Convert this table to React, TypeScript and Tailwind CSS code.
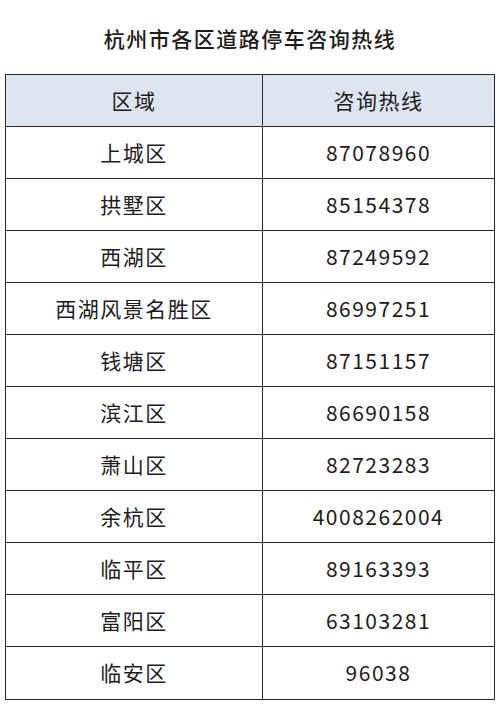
const rows: [string, string][] = [
  ["上城区", "87078960"],
  ["拱墅区", "85154378"],
  ["西湖区", "87249592"],
  ["西湖风景名胜区", "86997251"],
  ["钱塘区", "87151157"],
  ["滨江区", "86690158"],
  ["萧山区", "82723283"],
  ["余杭区", "4008262004"],
  ["临平区", "89163393"],
  ["富阳区", "63103281"],
  ["临安区", "96038"],
];

export default function App() {
  return (
    <div
      className="w-[500px] h-[727px] bg-white text-[#1c1c1c]"
      style={{ fontFamily: '"Noto Sans CJK SC", "Noto Sans", sans-serif' }}
    >
      <h1 className="pt-[23px] h-[74px] text-center text-[21px] leading-[30px] tracking-[1.5px] font-medium">
        杭州市各区道路停车咨询热线
      </h1>
      <div className="mx-[5px] border-[1.5px] border-[#2a2a2a]">
        <div className="grid grid-cols-[257px_1fr] h-[52px] bg-[#dde5ef] border-b-[1.5px] border-[#2a2a2a] text-[21px] tracking-[1.5px]">
          <div className="flex items-center justify-center border-r-[1.5px] border-[#2a2a2a]">区域</div>
          <div className="flex items-center justify-center">咨询热线</div>
        </div>
        {rows.map(([area, phone], i) => (
          <div
            key={area}
            className={`grid grid-cols-[257px_1fr] h-[52px] text-[21px] tracking-[1.5px] ${
              i < rows.length - 1 ? "border-b-[1.5px] border-[#2a2a2a]" : ""
            }`}
          >
            <div className="flex items-center justify-center border-r-[1.5px] border-[#2a2a2a]">{area}</div>
            <div className="flex items-center justify-center">{phone}</div>
          </div>
        ))}
      </div>
    </div>
  );
}
